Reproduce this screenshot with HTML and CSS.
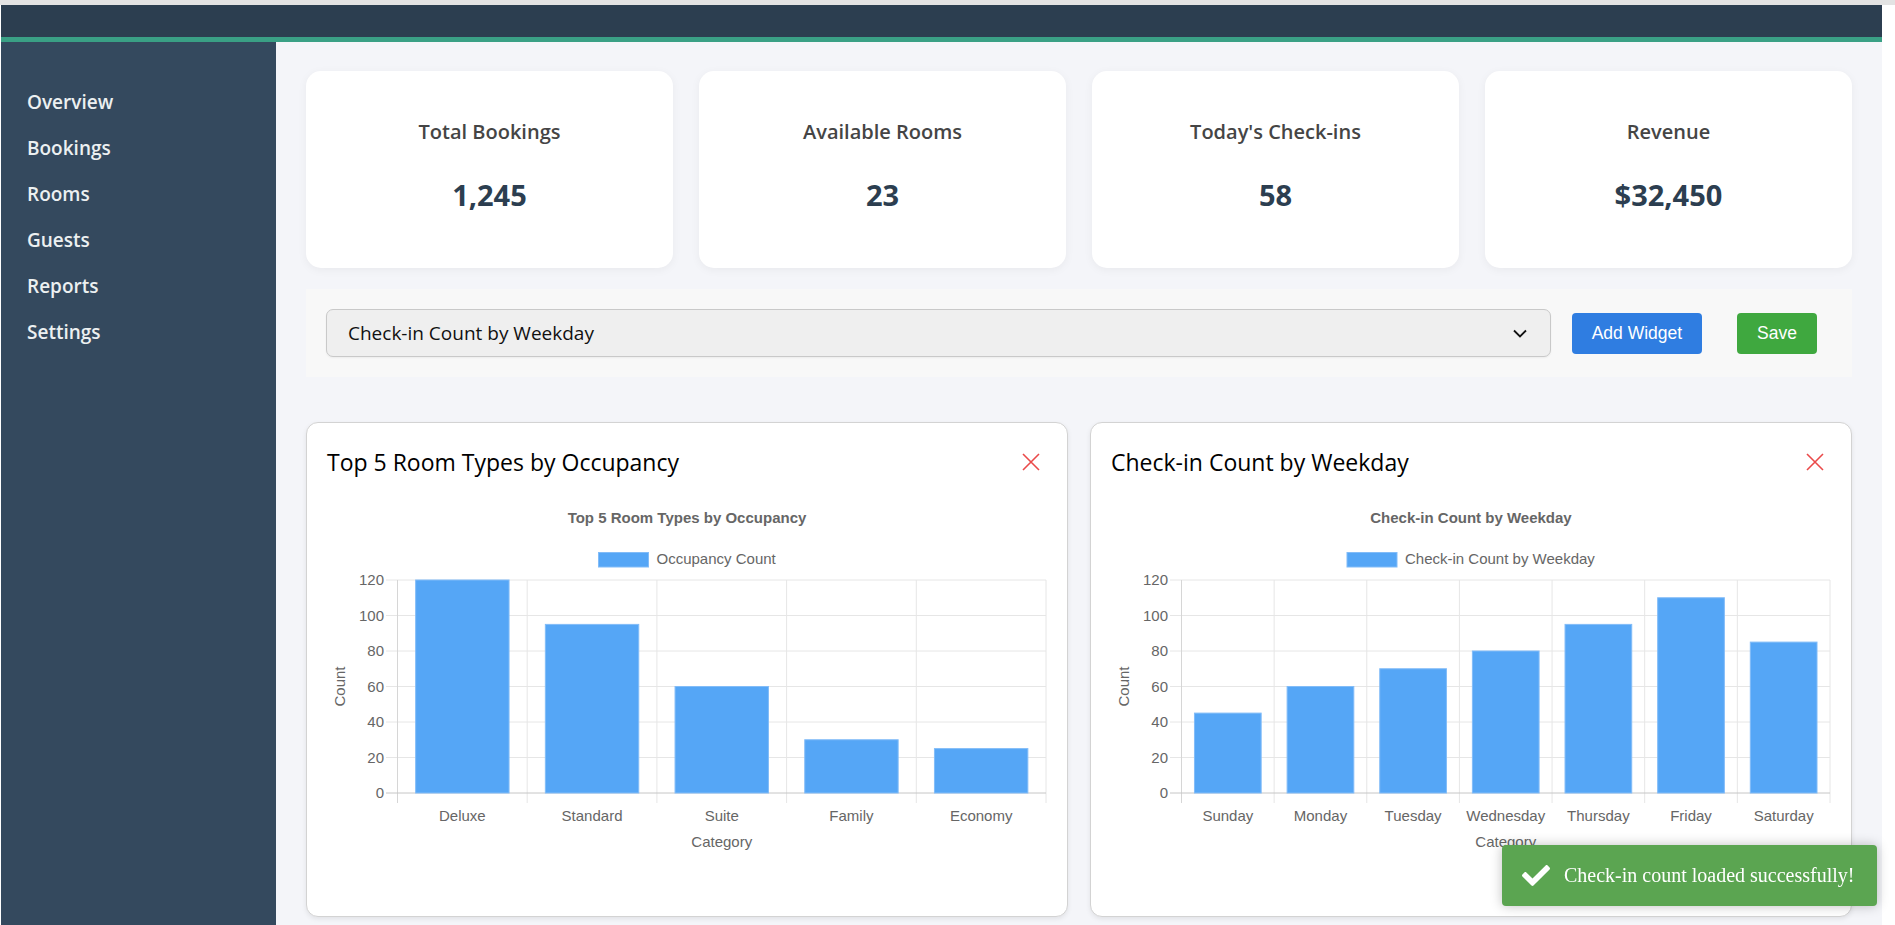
FILE: index.html
```html
<!DOCTYPE html>
<html lang="en">
<head>
<meta charset="utf-8">
<title>Hotel Dashboard</title>
<link rel="stylesheet" href="styles.css">
</head>
<body>
<div class="screen-top"></div>
<div class="screen">
  <div class="app">
    <header class="topbar"></header>
    <div class="layout">
      <nav class="sidebar">
        <a class="nav-link" href="#">Overview</a>
        <a class="nav-link" href="#">Bookings</a>
        <a class="nav-link" href="#">Rooms</a>
        <a class="nav-link" href="#">Guests</a>
        <a class="nav-link" href="#">Reports</a>
        <a class="nav-link" href="#">Settings</a>
      </nav>
      <main class="main">
        <section class="stats">
          <div class="stat-card"><h3 class="stat-label">Total Bookings</h3><p class="stat-value">1,245</p></div>
          <div class="stat-card"><h3 class="stat-label">Available Rooms</h3><p class="stat-value">23</p></div>
          <div class="stat-card"><h3 class="stat-label">Today's Check-ins</h3><p class="stat-value">58</p></div>
          <div class="stat-card"><h3 class="stat-label">Revenue</h3><p class="stat-value">$32,450</p></div>
        </section>

        <section class="toolbar">
          <div class="select">
            <span>Check-in Count by Weekday</span>
            <svg class="chevron" width="14" height="9" viewBox="0 0 14 9"><polyline points="1,1.5 7,7.5 13,1.5" fill="none" stroke="#111" stroke-width="1.8"/></svg>
          </div>
          <button class="btn btn-add">Add Widget</button>
          <button class="btn btn-save">Save</button>
        </section>

        <section class="widgets">
          <article class="widget">
            <div class="widget-header">
              <h2 class="widget-title">Top 5 Room Types by Occupancy</h2>
              <button class="close-btn" aria-label="Remove"><svg width="18" height="18" viewBox="0 0 18 18"><path d="M1 1L17 17M17 1L1 17" stroke="#ea4a4a" stroke-width="1.6" fill="none"/></svg></button>
            </div>
            <svg class="chart" width="720" height="396" viewBox="0 0 720 396">
              <text class="c-title" x="360" y="23.3" text-anchor="middle">Top 5 Room Types by Occupancy</text>
              <rect class="bar" x="271.5" y="52.5" width="50" height="14.5"/>
              <text class="c-text" x="329.5" y="64.3">Occupancy Count</text>
              <g class="grid">
                <line x1="59" y1="80" x2="719" y2="80"/>
                <line x1="59" y1="115.5" x2="719" y2="115.5"/>
                <line x1="59" y1="151" x2="719" y2="151"/>
                <line x1="59" y1="186.5" x2="719" y2="186.5"/>
                <line x1="59" y1="222" x2="719" y2="222"/>
                <line x1="59" y1="257.5" x2="719" y2="257.5"/>
                <line x1="200.2" y1="80" x2="200.2" y2="303"/>
                <line x1="329.9" y1="80" x2="329.9" y2="303"/>
                <line x1="459.6" y1="80" x2="459.6" y2="303"/>
                <line x1="589.3" y1="80" x2="589.3" y2="303"/>
                <line x1="719" y1="80" x2="719" y2="303"/>
              </g>
              <line class="axis" x1="70.5" y1="80" x2="70.5" y2="303"/>
              <line class="zero" x1="59" y1="293" x2="719" y2="293"/>
              <g class="c-text" text-anchor="end">
                <text x="57" y="85.4">120</text>
                <text x="57" y="120.9">100</text>
                <text x="57" y="156.4">80</text>
                <text x="57" y="191.9">60</text>
                <text x="57" y="227.4">40</text>
                <text x="57" y="262.9">20</text>
                <text x="57" y="298.4">0</text>
              </g>
              <g class="bars">
                <rect class="bar" x="88.65" y="80" width="93.4" height="213"/>
                <rect class="bar" x="218.35" y="124.4" width="93.4" height="168.6"/>
                <rect class="bar" x="348.05" y="186.5" width="93.4" height="106.5"/>
                <rect class="bar" x="477.75" y="239.75" width="93.4" height="53.25"/>
                <rect class="bar" x="607.45" y="248.6" width="93.4" height="44.4"/>
              </g>
              <g class="c-text" text-anchor="middle">
                <text x="135.35" y="320.7">Deluxe</text>
                <text x="265.05" y="320.7">Standard</text>
                <text x="394.75" y="320.7">Suite</text>
                <text x="524.45" y="320.7">Family</text>
                <text x="654.15" y="320.7">Economy</text>
                <text x="394.75" y="347.3">Category</text>
                <text transform="translate(18.3 186.5) rotate(-90)">Count</text>
              </g>
            </svg>
          </article>

          <article class="widget">
            <div class="widget-header">
              <h2 class="widget-title">Check-in Count by Weekday</h2>
              <button class="close-btn" aria-label="Remove"><svg width="18" height="18" viewBox="0 0 18 18"><path d="M1 1L17 17M17 1L1 17" stroke="#ea4a4a" stroke-width="1.6" fill="none"/></svg></button>
            </div>
            <svg class="chart" width="720" height="396" viewBox="0 0 720 396">
              <text class="c-title" x="360" y="23.3" text-anchor="middle">Check-in Count by Weekday</text>
              <rect class="bar" x="236" y="52.5" width="50" height="14.5"/>
              <text class="c-text" x="294" y="64.3">Check-in Count by Weekday</text>
              <g class="grid">
                <line x1="59" y1="80" x2="719" y2="80"/>
                <line x1="59" y1="115.5" x2="719" y2="115.5"/>
                <line x1="59" y1="151" x2="719" y2="151"/>
                <line x1="59" y1="186.5" x2="719" y2="186.5"/>
                <line x1="59" y1="222" x2="719" y2="222"/>
                <line x1="59" y1="257.5" x2="719" y2="257.5"/>
                <line x1="163.14" y1="80" x2="163.14" y2="303"/>
                <line x1="255.78" y1="80" x2="255.78" y2="303"/>
                <line x1="348.42" y1="80" x2="348.42" y2="303"/>
                <line x1="441.06" y1="80" x2="441.06" y2="303"/>
                <line x1="533.7" y1="80" x2="533.7" y2="303"/>
                <line x1="626.34" y1="80" x2="626.34" y2="303"/>
                <line x1="719" y1="80" x2="719" y2="303"/>
              </g>
              <line class="axis" x1="70.5" y1="80" x2="70.5" y2="303"/>
              <line class="zero" x1="59" y1="293" x2="719" y2="293"/>
              <g class="c-text" text-anchor="end">
                <text x="57" y="85.4">120</text>
                <text x="57" y="120.9">100</text>
                <text x="57" y="156.4">80</text>
                <text x="57" y="191.9">60</text>
                <text x="57" y="227.4">40</text>
                <text x="57" y="262.9">20</text>
                <text x="57" y="298.4">0</text>
              </g>
              <g class="bars">
                <rect class="bar" x="83.47" y="213.1" width="66.7" height="79.9"/>
                <rect class="bar" x="176.11" y="186.5" width="66.7" height="106.5"/>
                <rect class="bar" x="268.75" y="168.75" width="66.7" height="124.25"/>
                <rect class="bar" x="361.39" y="151" width="66.7" height="142"/>
                <rect class="bar" x="454.03" y="124.4" width="66.7" height="168.6"/>
                <rect class="bar" x="546.67" y="97.75" width="66.7" height="195.25"/>
                <rect class="bar" x="639.31" y="142.1" width="66.7" height="150.9"/>
              </g>
              <g class="c-text" text-anchor="middle">
                <text x="116.82" y="320.7">Sunday</text>
                <text x="209.46" y="320.7">Monday</text>
                <text x="302.1" y="320.7">Tuesday</text>
                <text x="394.74" y="320.7">Wednesday</text>
                <text x="487.38" y="320.7">Thursday</text>
                <text x="580.02" y="320.7">Friday</text>
                <text x="672.66" y="320.7">Saturday</text>
                <text x="394.75" y="347.3">Category</text>
                <text transform="translate(18.3 186.5) rotate(-90)">Count</text>
              </g>
            </svg>
          </article>
        </section>
      </main>
    </div>
  </div>
  <div class="scroll-gutter"></div>
</div>

<div class="toast" role="status">
  <svg class="toast-icon" width="28" height="21" viewBox="0 64 512 384"><path fill="#fff" d="M173.898 439.404l-166.4-166.4c-9.997-9.997-9.997-26.206 0-36.204l36.203-36.204c9.997-9.998 26.207-9.998 36.204 0L192 312.69 432.095 72.596c9.997-9.997 26.207-9.997 36.204 0l36.203 36.204c9.997 9.997 9.997 26.206 0 36.204l-294.4 294.401c-9.998 9.997-26.207 9.997-36.204-.001z"/></svg>
  <span>Check-in count loaded successfully!</span>
</div>
</body>
</html>
```

FILE: styles.css
```css
html, body {
  margin: 0;
  padding: 0;
}

body {
  background: #ffffff;
  overflow: hidden;
  font-family: "Open Sans", "Noto Sans", sans-serif;
}

.screen-top {
  height: 5px;
  background: #e3e3e3;
}

.screen {
  display: flex;
  height: 920px;
}

.app {
  width: 1881px;
  margin-left: 1px;
  display: flex;
  flex-direction: column;
  flex: none;
}

.scroll-gutter {
  flex: 1;
  background: #ffffff;
}

.topbar {
  height: 32px;
  background: #2c3e50;
  border-bottom: 5px solid #3aa085;
  flex: none;
}

.layout {
  display: flex;
  flex: 1;
  min-height: 0;
}

.sidebar {
  width: 275px;
  flex: none;
  background: #34495e;
  padding-top: 37px;
  display: flex;
  flex-direction: column;
  box-sizing: border-box;
}

.nav-link {
  display: block;
  padding: 10px 26px;
  line-height: 26px;
  font-size: 19px;
  font-weight: 600;
  color: #ecf0f1;
  text-decoration: none;
}

.main {
  flex: 1;
  background: #f4f5f9;
  padding: 29px 30px;
  min-width: 0;
}

.stats {
  display: grid;
  grid-template-columns: repeat(4, 1fr);
  gap: 26px;
}

.stat-card {
  background: #ffffff;
  border-radius: 15px;
  box-shadow: 0 2px 10px rgba(0, 0, 0, 0.05);
  height: 197px;
  box-sizing: border-box;
  padding-top: 47px;
  text-align: center;
}

.stat-label {
  margin: 0 0 29px;
  font-size: 20px;
  font-weight: 600;
  line-height: 28px;
  color: #454545;
}

.stat-value {
  margin: 0;
  font-size: 29px;
  font-weight: 700;
  line-height: 40px;
  color: #2c3e50;
}

.toolbar {
  margin-top: 21px;
  background: #f8f8f8;
  padding: 20px 35px 20px 20px;
  display: flex;
  align-items: center;
}

.select {
  flex: 1;
  height: 48px;
  box-sizing: border-box;
  border: 1px solid #c9c9c9;
  border-radius: 7px;
  background: #efefef;
  display: flex;
  align-items: center;
  justify-content: space-between;
  padding: 0 23px 0 21px;
  font-size: 19px;
  color: #111111;
  box-shadow: 0 1px 2px rgba(0, 0, 0, 0.05);
}

.chevron {
  display: block;
}

.btn {
  border: none;
  border-radius: 4px;
  color: #ffffff;
  font-family: "Liberation Sans", Arial, sans-serif;
  font-size: 17.5px;
  padding: 0 20px;
  height: 41px;
  line-height: 41px;
  cursor: pointer;
}

.btn-add {
  margin-left: 21px;
  background: #2f7de1;
}

.btn-save {
  margin-left: 35px;
  background: #3fa83f;
}

.widgets {
  margin-top: 45px;
  display: grid;
  grid-template-columns: 1fr 1fr;
  gap: 22px;
}

.widget {
  background: #ffffff;
  border: 1px solid #d3d3d3;
  border-radius: 12px;
  padding: 20px;
  box-shadow: 0 2px 5px rgba(0, 0, 0, 0.08);
}

.widget-header {
  height: 38px;
  display: flex;
  align-items: center;
  justify-content: space-between;
  margin-bottom: 19px;
}

.widget-title {
  margin: 0;
  font-size: 23px;
  font-weight: 500;
  color: #000000;
}

.close-btn {
  border: none;
  background: none;
  padding: 0;
  margin-right: 7px;
  width: 18px;
  height: 18px;
  cursor: pointer;
}

.close-btn svg {
  display: block;
}

.chart {
  display: block;
  width: 720px;
  height: 396px;
  font-family: "Liberation Sans", Arial, Helvetica, sans-serif;
}

.c-title {
  font-size: 15px;
  font-weight: 700;
  fill: #666666;
}

.c-text {
  font-size: 15px;
  fill: #666666;
}

.grid line {
  stroke: #e6e6e6;
  stroke-width: 1;
}

.axis {
  stroke: #d6d6d6;
  stroke-width: 1;
}

.zero {
  stroke: #c6c6c6;
  stroke-width: 1;
}

.bar {
  fill: #55a6f6;
  stroke: #82bcf8;
  stroke-width: 1;
}

.toast {
  position: fixed;
  right: 18px;
  bottom: 19px;
  width: 375px;
  height: 61px;
  box-sizing: border-box;
  background: #5ba551;
  border-radius: 4px;
  box-shadow: 0 0 12px rgba(0, 0, 0, 0.25);
  display: flex;
  align-items: center;
  padding-left: 20px;
  color: #ffffff;
  font-family: "Liberation Serif", "Times New Roman", serif;
  font-size: 20px;
}

.toast-icon {
  display: block;
  margin-right: 14px;
  flex: none;
}
```
